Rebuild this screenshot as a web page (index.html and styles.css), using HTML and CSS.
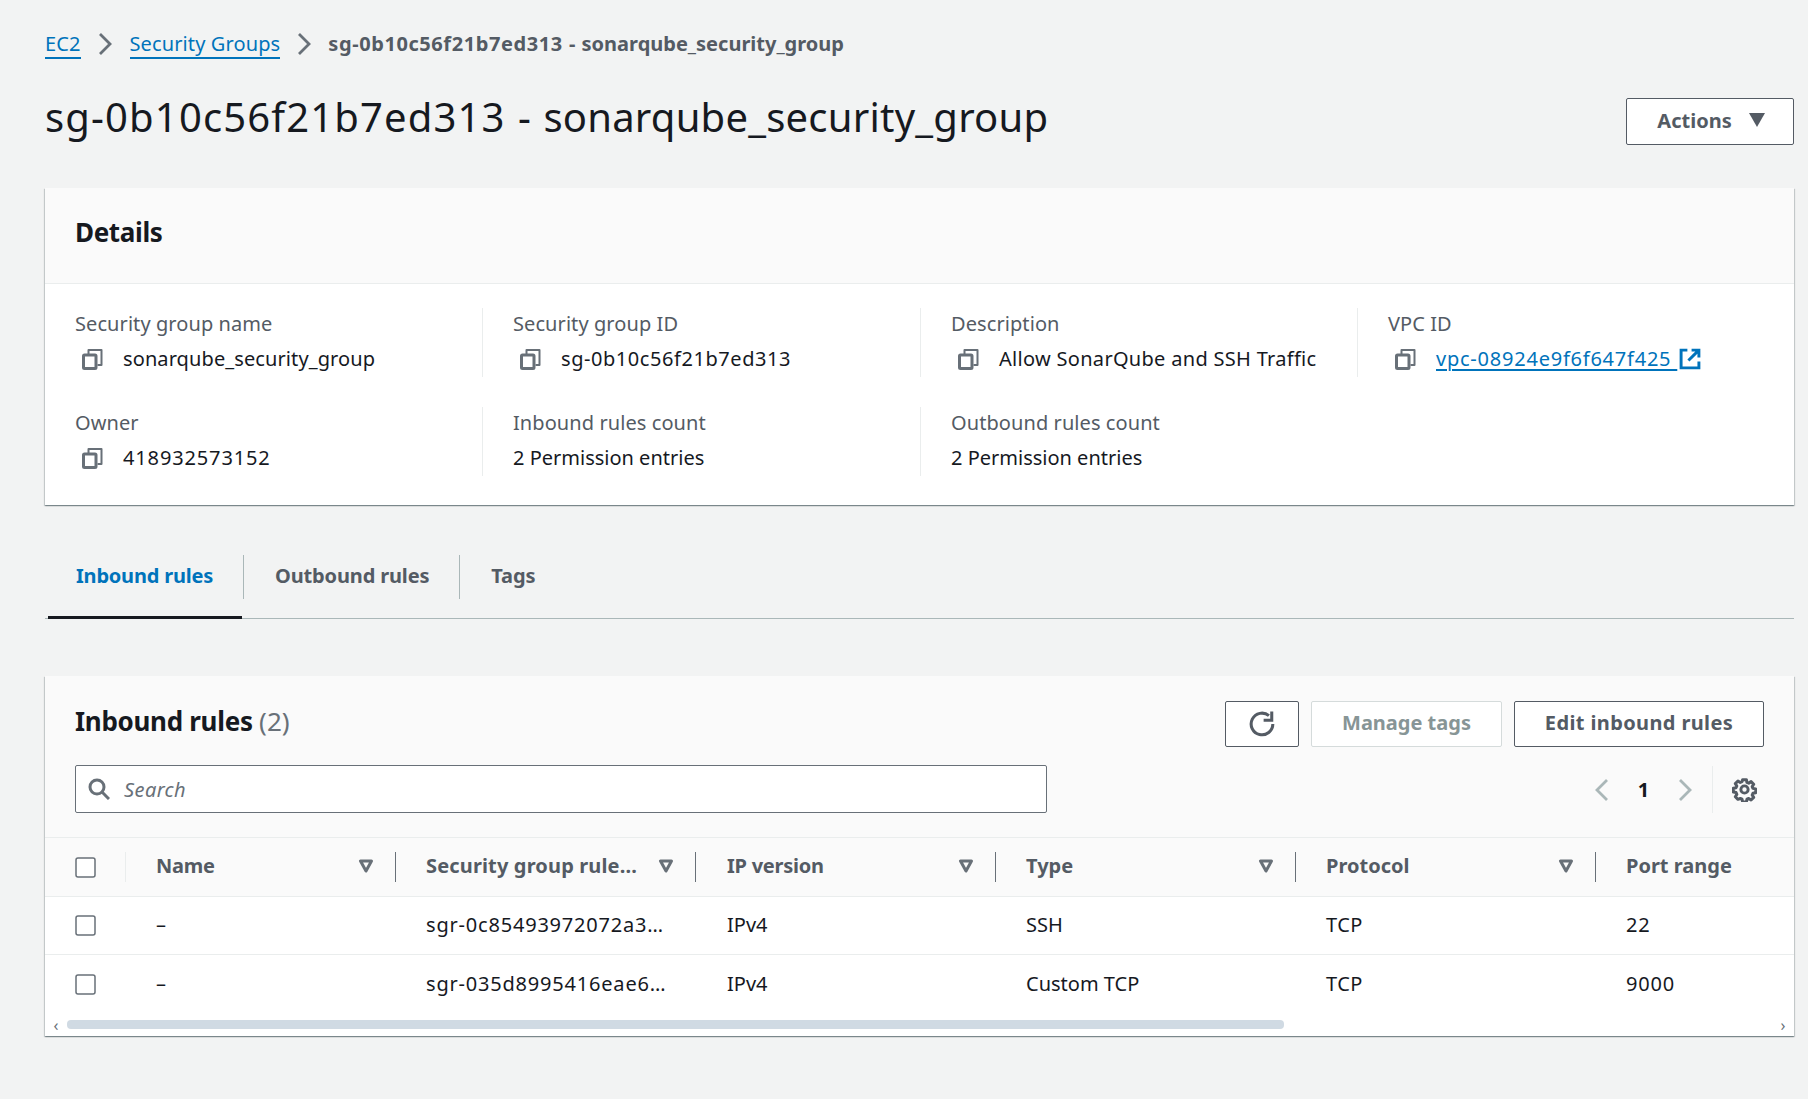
FILE: index.html
```html
<!DOCTYPE html>
<html lang="en">
<head>
<meta charset="utf-8">
<title>sg-0b10c56f21b7ed313 - sonarqube_security_group</title>
<link rel="stylesheet" href="styles.css">
</head>
<body>
<svg class="defs" aria-hidden="true">
  <symbol id="copy" viewBox="0 0 21 22"><path d="M6.500 6V2h13v15h-4" fill="none" stroke="currentColor" stroke-width="2" stroke-linejoin="round"/><rect x="1.500" y="7" width="12.500" height="13.500" rx="1" fill="none" stroke="currentColor" stroke-width="3"/></symbol>
  <symbol id="sort" viewBox="0 0 16 14"><path d="M2.500 2h11L8 12z" fill="none" stroke="currentColor" stroke-width="3" stroke-linejoin="round"/></symbol>
  <symbol id="check" viewBox="0 0 21 21"><rect x="1" y="1" width="19" height="19" rx="2" fill="#fff" stroke="currentColor" stroke-width="1.500"/></symbol>
</svg>
<main class="page">
  <nav class="crumbs">
    <a class="crumb-link" href="#">EC2</a>
    <svg class="crumb-sep crumb-sep-first" viewBox="0 0 14 24"><path d="M2 2l10 10L2 22" fill="none" stroke="currentColor" stroke-width="2.800"/></svg>
    <a class="crumb-link crumb-link-wide" href="#">Security Groups</a>
    <svg class="crumb-sep" viewBox="0 0 14 24"><path d="M2 2l10 10L2 22" fill="none" stroke="currentColor" stroke-width="2.800"/></svg>
    <span class="crumb-current"><span class="crumb-id">sg-0b10c56f21b7ed313</span> - sonarqube_security_group</span>
  </nav>

  <header class="page-head">
    <h1 class="page-title"><span class="title-id">sg-0b10c56f21b7ed313</span> - sonarqube_security_group</h1>
    <button class="btn btn-actions">Actions
      <svg class="caret" viewBox="0 0 16 14"><path d="M0 0h16L8 14z" fill="currentColor"/></svg>
    </button>
  </header>

  <section class="card details">
    <h2 class="details-head">Details</h2>
    <div class="details-grid">
      <div class="field">
        <div class="field-label">Security group name</div>
        <div class="field-value value-name"><svg class="copy"><use href="#copy"/></svg>sonarqube_security_group</div>
      </div>
      <div class="field">
        <div class="field-label">Security group ID</div>
        <div class="field-value value-id"><svg class="copy"><use href="#copy"/></svg>sg-0b10c56f21b7ed313</div>
      </div>
      <div class="field">
        <div class="field-label">Description</div>
        <div class="field-value value-desc"><svg class="copy"><use href="#copy"/></svg>Allow SonarQube and SSH Traffic</div>
      </div>
      <div class="field field-last">
        <div class="field-label">VPC ID</div>
        <div class="field-value"><svg class="copy"><use href="#copy"/></svg><a class="vpc-link" href="#">vpc-08924e9f6f647f425 <svg class="ext" viewBox="0 0 21 21"><path d="M8 2H2v17h17v-6" fill="none" stroke="currentColor" stroke-width="2.800"/><path d="M9 12L18 3M12 2h7v7" fill="none" stroke="currentColor" stroke-width="2.800"/></svg></a></div>
      </div>
      <div class="field">
        <div class="field-label">Owner</div>
        <div class="field-value value-num"><svg class="copy"><use href="#copy"/></svg>418932573152</div>
      </div>
      <div class="field">
        <div class="field-label">Inbound rules count</div>
        <div class="field-value">2 Permission entries</div>
      </div>
      <div class="field field-last">
        <div class="field-label">Outbound rules count</div>
        <div class="field-value">2 Permission entries</div>
      </div>
    </div>
  </section>

  <div class="tabs">
    <a class="tab tab-active" href="#"><span class="tab-label">Inbound rules</span></a>
    <a class="tab" href="#"><span class="tab-label">Outbound rules</span></a>
    <a class="tab" href="#"><span class="tab-label tab-label-last">Tags</span></a>
  </div>

  <section class="card rules">
    <div class="rules-head">
      <div class="rules-top">
        <h2 class="rules-title">Inbound rules <span class="rules-count">(2)</span></h2>
        <div class="rules-actions">
          <button class="btn btn-icon" aria-label="Refresh"><svg class="refresh" viewBox="0 0 24 24"><path d="M22 12a10 10 0 1 1-3.600-7.700" fill="none" stroke="currentColor" stroke-width="2.800"/><path d="M21 .5v8h-7.500" fill="none" stroke="currentColor" stroke-width="2.800"/></svg></button>
          <button class="btn btn-disabled">Manage tags</button>
          <button class="btn btn-edit">Edit inbound rules</button>
        </div>
      </div>
      <div class="rules-tools">
        <div class="search">
          <svg class="search-icon" viewBox="0 0 22 22"><circle cx="9" cy="9" r="7" fill="none" stroke="currentColor" stroke-width="3"/><path d="M14 14l7 7" fill="none" stroke="currentColor" stroke-width="3"/></svg>
          <span class="search-text">Search</span>
        </div>
        <div class="pager">
          <svg class="pager-arrow" viewBox="0 0 14 24"><path d="M12 2L2 12l10 10" fill="none" stroke="currentColor" stroke-width="2.800"/></svg>
          <span class="pager-num">1</span>
          <svg class="pager-arrow" viewBox="0 0 14 24"><path d="M2 2l10 10L2 22" fill="none" stroke="currentColor" stroke-width="2.800"/></svg>
          <span class="pager-sep"><svg class="gear" viewBox="0 0 24 24"><path d="M10 1.500h4l.6 2.900 1.900.8 2.500-1.600 2.800 2.800-1.600 2.500.8 1.900 2.900.6v4l-2.900.6-.8 1.900 1.600 2.500-2.800 2.800-2.500-1.600-1.900.8-.6 2.900h-4l-.6-2.900-1.900-.8L5 22.500l-2.800-2.800 1.600-2.500-.8-1.900-2.900-.6v-4l2.900-.6.8-1.900L2.200 5.700 5 2.900l2.500 1.600 1.900-.8z" transform="translate(1.200 1.200) scale(.9)" fill="none" stroke="currentColor" stroke-width="3.200" stroke-linejoin="round"/><circle cx="12" cy="12" r="3.500" fill="none" stroke="currentColor" stroke-width="2.800"/></svg></span>
        </div>
      </div>
    </div>
    <div class="table-row table-header">
      <div class="th th-check"><svg class="check"><use href="#check"/></svg></div>
      <div class="th"><span class="th-tight">Name</span><svg class="sort"><use href="#sort"/></svg></div>
      <div class="th"><span class="th-wide">Security group rule...</span><svg class="sort"><use href="#sort"/></svg></div>
      <div class="th th-ip"><span class="th-tight">IP version</span><svg class="sort"><use href="#sort"/></svg></div>
      <div class="th">Type<svg class="sort"><use href="#sort"/></svg></div>
      <div class="th">Protocol<svg class="sort"><use href="#sort"/></svg></div>
      <div class="th th-last">Port range</div>
    </div>
    <div class="table-row table-body">
      <div class="td td-check"><svg class="check"><use href="#check"/></svg></div>
      <div class="td">–</div>
      <div class="td td-id">sgr-0c85493972072a3…</div>
      <div class="td td-ip">IPv4</div>
      <div class="td">SSH</div>
      <div class="td td-caps">TCP</div>
      <div class="td td-id">22</div>
    </div>
    <div class="table-row table-body table-end">
      <div class="td td-check"><svg class="check"><use href="#check"/></svg></div>
      <div class="td">–</div>
      <div class="td td-id">sgr-035d8995416eae6…</div>
      <div class="td td-ip">IPv4</div>
      <div class="td">Custom TCP</div>
      <div class="td td-caps">TCP</div>
      <div class="td td-id">9000</div>
    </div>
    <div class="scrollbar">
      <span class="scroll-arrow">‹</span>
      <div class="scroll-track"><div class="scroll-thumb"></div></div>
      <span class="scroll-arrow">›</span>
    </div>
  </section>
</main>
</body>
</html>
```
FILE: styles.css
```css
* { box-sizing: border-box; }
html, body { margin: 0; padding: 0; }
body {
  background: #f2f3f3;
  color: #16191f;
  font-family: "Noto Sans", "Open Sans", sans-serif;
  font-size: 20px;
  height: 1099px;
  overflow: hidden;
}
.defs { display: none; }
.page { width: 1808px; padding: 28px 14px 0 45px; }

.crumbs { display: flex; align-items: center; height: 32px; }
.crumb-link {
  color: #0073bb;
  text-decoration: none;
  border-bottom: 2px solid #0073bb;
  line-height: 27px;
  letter-spacing: .1px;
}
.crumb-link-wide { letter-spacing: .12px; }
.crumb-sep { width: 14px; height: 24px; margin: 0 17px; color: #687078; flex: none; }
.crumb-sep-first { margin-right: 18px; }
.crumb-current { color: #545b64; font-weight: 700; letter-spacing: 0; word-spacing: 1px; padding-bottom: 2px; white-space: pre; }
.crumb-id { letter-spacing: .58px; }

.page-head {
  display: flex;
  justify-content: space-between;
  align-items: center;
  height: 47px;
  margin-top: 38px;
}
.page-title { margin: 0 0 10px; font-size: 40px; font-weight: 400; line-height: 46px; letter-spacing: .23px; word-spacing: 1.7px; }
.title-id { letter-spacing: 1.15px; }

.btn {
  display: inline-flex;
  align-items: center;
  justify-content: center;
  height: 46px;
  background: #fff;
  border: 1px solid #545b64;
  border-radius: 2px;
  color: #545b64;
  font: 700 20px "Noto Sans", "Open Sans", sans-serif;
  padding: 0 0 4px;
}
.btn-actions { width: 168px; height: 47px; padding: 0 0 3px 2px; }
.caret { width: 16px; height: 14px; margin-left: 17px; }
.btn-icon { width: 74px; padding: 0; }
.btn-disabled { width: 191px; border-color: #d5dbdb; color: #879596; }
.btn-edit { width: 250px; letter-spacing: .38px; }

.card {
  background: #fff;
  box-shadow: 0 1px 1px rgba(0,28,36,.3), 1px 1px 1px rgba(0,28,36,.15), -1px 1px 1px rgba(0,28,36,.15);
}
.details { margin-top: 43px; height: 317px; }
.details-head {
  margin: 0;
  height: 96px;
  padding: 0 30px 8px;
  display: flex;
  align-items: center;
  background: #fafafa;
  border-bottom: 1px solid #eaeded;
  font-size: 26px;
  font-weight: 700;
  letter-spacing: -.35px;
}
.details-grid {
  display: grid;
  grid-template-columns: 438px 438px 437px 1fr;
  row-gap: 30px;
  padding-top: 24px;
}
.field { height: 69px; padding-left: 30px; border-right: 1px solid #eaeded; }
.field-last { border-right: 0; }
.field-label { height: 32px; line-height: 32px; color: #545b64; letter-spacing: .08px; }
.field-value { display: flex; align-items: center; height: 37px; line-height: 37px; }
.value-name { letter-spacing: .1px; }
.value-id { letter-spacing: .56px; }
.value-desc { letter-spacing: .3px; }
.value-num { letter-spacing: .86px; }
.copy { width: 21px; height: 22px; margin: 0 20px 0 7px; color: #687078; flex: none; }
.vpc-link { color: #0073bb; text-decoration: underline; text-underline-offset: 3px; letter-spacing: .77px; }
.ext { width: 22px; height: 22px; vertical-align: -4px; margin-left: 2px; }

.tabs {
  display: flex;
  margin-top: 40px;
  height: 74px;
  border-bottom: 1px solid #aab7b8;
}
.tab { height: 73px; padding-top: 10px; text-decoration: none; color: #545b64; font-weight: 700; letter-spacing: -.15px; }
.tab-label {
  display: flex;
  align-items: center;
  height: 44px;
  padding: 0 30px 3px 31px;
  border-right: 1px solid #aab7b8;
}
.tab-label-last { border-right: 0; }
.tab-active { margin-left: 3px; margin-right: 2px; color: #0073bb; border-bottom: 3px solid #16191f; height: 74px; letter-spacing: -.2px; }
.tab-active .tab-label { padding-left: 28px; padding-right: 30px; margin-right: -2px; }

.rules { margin-top: 57px; height: 360px; overflow: hidden; }
.rules-head {
  height: 162px;
  padding: 25px 30px 0;
  background: #fafafa;
  border-bottom: 1px solid #eaeded;
}
.rules-top { display: flex; justify-content: space-between; align-items: flex-start; height: 47px; }
.rules-title { margin: 0; font-size: 26px; font-weight: 700; line-height: 40px; letter-spacing: -.3px; }
.rules-count { font-weight: 400; color: #687078; letter-spacing: 0; }
.rules-actions { display: flex; gap: 12px; }
.refresh { width: 26px; height: 26px; }
.rules-tools { display: flex; justify-content: space-between; margin-top: 17px; }
.search {
  display: flex;
  align-items: center;
  width: 972px;
  height: 48px;
  background: #fff;
  border: 1px solid #687078;
  border-radius: 2px;
  padding-left: 12px;
  color: #687078;
}
.search-icon { width: 22px; height: 22px; flex: none; }
.search-text { margin-left: 14px; font-style: italic; letter-spacing: .4px; }
.pager { display: flex; align-items: center; height: 47px; margin-top: 1px; }
.pager-arrow { width: 14px; height: 24px; color: #aab7b8; flex: none; }
.pager-num { width: 69px; text-align: center; font-weight: 700; }
.pager-sep {
  display: flex;
  align-items: center;
  height: 47px;
  margin-left: 20px;
  padding: 0 7px 0 19px;
  border-left: 1px solid #eaeded;
}
.gear { width: 25px; height: 25px; color: #545b64; }

.table-row {
  display: grid;
  grid-template-columns: 81px 270px 300px 300px 300px 300px 1fr;
  align-items: center;
}
.table-header { height: 59px; background: #fafafa; border-bottom: 1px solid #eaeded; }
.th {
  display: flex;
  align-items: center;
  justify-content: space-between;
  height: 30px;
  padding: 0 21px 2px 30px;
  border-right: 1px solid #687078;
  color: #545b64;
  font-weight: 700;
  line-height: 26px;
}
.th-tight { letter-spacing: -.25px; }
.th-wide { letter-spacing: .15px; }
.th-ip { padding-left: 31px; }
.th-check { padding: 0 0 0 30px; border-right-color: #eaeded; }
.th-last { border-right: 0; }
.sort { width: 16px; height: 14px; color: #687078; flex: none; }
.table-body { height: 58px; border-bottom: 1px solid #eaeded; }
.table-end { border-bottom: 0; }
.td { padding: 0 0 2px 30px; white-space: nowrap; overflow: hidden; color: #16191f; line-height: 27px; }
.td-check { padding-bottom: 0; }
.td-ip { padding-left: 31px; }
.td-id { letter-spacing: .8px; }
.td-caps { letter-spacing: .5px; }
.check { width: 21px; height: 21px; color: #687078; display: block; }
.scrollbar { display: flex; align-items: center; height: 23px; padding: 0 6px; color: #687078; }
.scroll-arrow { width: 10px; font-size: 16px; line-height: 16px; flex: none; text-align: center; }
.scroll-track { flex: 1; margin: 0 0 0 6px; }
.scroll-thumb { width: 1217px; height: 9px; border-radius: 4px; background: #d0dae3; }
```
